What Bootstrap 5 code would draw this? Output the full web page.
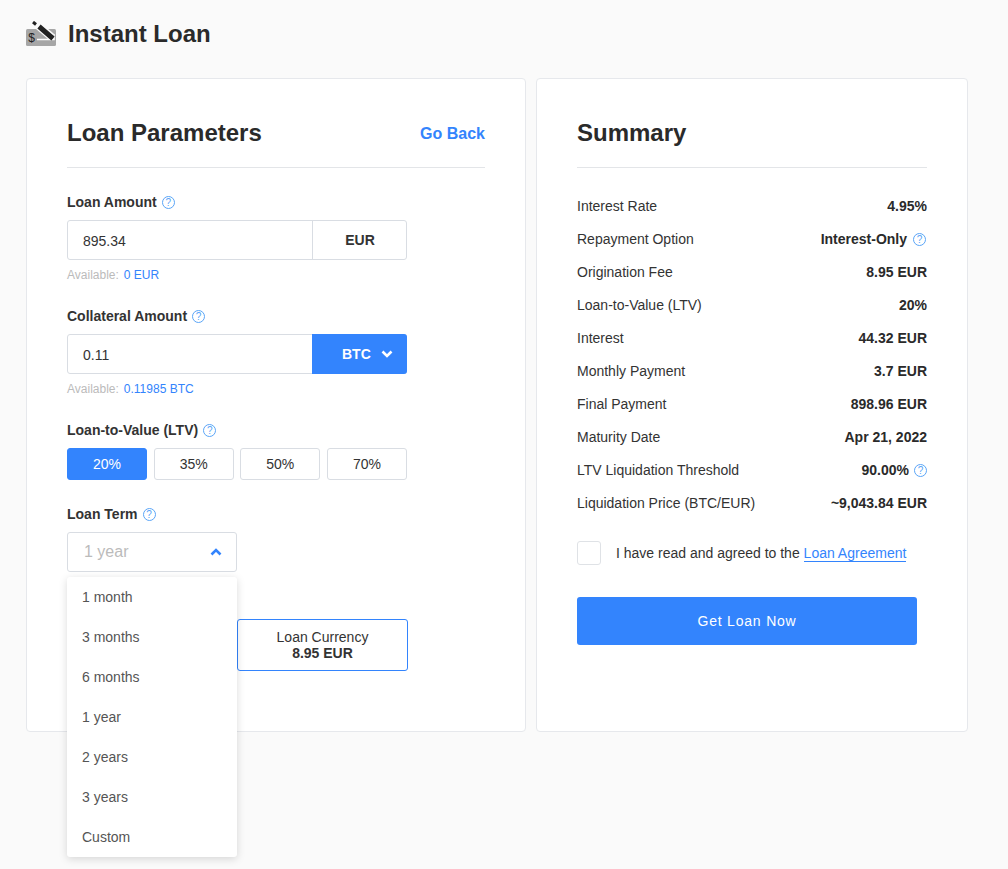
<!doctype html>
<html lang="en"><head><meta charset="utf-8"><title>Instant Loan</title>
<link href="https://cdn.jsdelivr.net/npm/bootstrap@5.3.0/dist/css/bootstrap.min.css" rel="stylesheet">
<style>
body{background:#fafafa;font-family:"Liberation Sans",Arial,sans-serif;color:#333;font-size:14px;min-height:869px}
.shell{padding:0 26px}
.topbar{height:68px;margin-bottom:10px;gap:12px}
.topbar h1{font-size:24px;font-weight:700;color:#2a2a2a;margin:0;line-height:28px}
.panel{background:#fff;border:1px solid #e6e8ec;border-radius:4px;padding:40px;height:654px}
.panel-l{width:500px}.panel-r{width:432px;margin-left:10px}
.panel-head{height:49px;border-bottom:1px solid #e3e5e8;align-items:flex-start;margin-bottom:26px}
.panel-head h2{font-size:24px;line-height:28px;font-weight:700;color:#2a2a2a;margin:0}
.back{font-size:16px;font-weight:700;color:#3384fd;text-decoration:none;line-height:30px}
.fld{width:340px}
.lbl{font-size:14px;font-weight:700;color:#333;line-height:16px;height:16px;margin-bottom:10px;gap:5px}
.hint{display:block;flex:none;width:13px;height:13px;border:1px solid #5aa5f7;border-radius:50%;color:#5aa5f7;font-size:10px;font-weight:400;line-height:11px;text-align:center}
.pair{height:40px;border:1px solid #d9dde3;border-radius:3px}
.pair-v{flex:1;padding-left:15px;line-height:40px;font-size:14px;color:#333}
.pair-u{width:95px;margin:-1px -1px -1px 0;border-left:1px solid #d9dde3;font-weight:700;color:#333;line-height:40px;text-align:center}
.pair-btc{width:95px;margin:-1px -1px -1px 0;background:#3384fd;color:#fff;font-weight:700;border-radius:0 3px 3px 0;gap:10px;padding-left:30px;height:40px}
.avail{font-size:12px;line-height:14px;margin-top:8px;height:14px;color:#bbb;gap:5px}
.avail span+span{color:#3384fd}
.gapb{margin-bottom:26px}
.ltv{margin-bottom:26px}
.ltv-b{width:80px;height:32px;border:1px solid #d9dde3;border-radius:3px;text-align:center;line-height:30px;color:#333;background:#fff}
.ltv-b.on{background:#3384fd;border-color:#3384fd;color:#fff}
.term-wrap{width:170px}
.term{height:40px;border:1px solid #d9dde3;border-radius:3px;padding:0 14px 0 16px;font-size:16px;color:#bbb}
.menu-pop{top:45px;left:0;width:170px;background:#fff;border-radius:3px;box-shadow:0 2px 8px rgba(0,0,0,.15);z-index:5}
.menu-pop div{height:40px;line-height:40px;padding-left:15px;color:#555}
.fee-row{margin-top:47px;width:341px}
.fee{width:171px;height:52px;border:1px solid #3384fd;border-radius:3px;text-align:center;line-height:16px;padding-top:9px;color:#333}
.fee-l{width:170px;border-color:#d9dde3;border-right:0;border-radius:3px 0 0 3px}
.fee b{display:block}
.panel-r .panel-head{margin-bottom:22px}
.sum{height:33px;color:#333}
.sum b{color:#2a2a2a}
.val-q{gap:5px}
.val-q-in{gap:6px;margin-right:1px}
.agree{margin-top:21px;height:24px;gap:15px}
.tick{width:24px;height:24px;border:1px solid #dfe2e6;border-radius:3px;background:#fff}
.agree a{color:#3384fd;text-decoration:none;border-bottom:1px solid #3384fd}
.cta{width:340px;height:48px;margin-top:32px;background:#3384fd;border:0;border-radius:3px;color:#fff;letter-spacing:.8px;font-size:14px}
.cta:hover{background:#3384fd;color:#fff}
</style></head><body>
<div class="shell">
<header class="topbar d-flex align-items-center">
<svg width="30" height="26" viewBox="0 0 30 26"><rect x="0" y="8" width="30" height="17" rx="1.500" fill="#a6a6a6"/><path d="M11 18.500H28V13" fill="none" stroke="#fff" stroke-width="1.500"/><path d="M12 4.500 25.500 16" fill="none" stroke="#fafafa" stroke-width="8"/><path d="M13 5.500 24 15 27 17.500" fill="none" stroke="#222" stroke-width="5"/><path d="M7 1 10 3.500" fill="none" stroke="#222" stroke-width="3"/><text x="5.500" y="21" text-anchor="middle" font-size="12" font-family="Liberation Sans" fill="#222">$</text></svg>
<h1>Instant Loan</h1></header>
<main class="d-flex align-items-start">
<section class="panel panel-l">
<div class="panel-head d-flex justify-content-between"><h2>Loan Parameters</h2><a class="back" href="#">Go Back</a></div>
<div class="fld gapb">
<div class="lbl d-flex align-items-center">Loan Amount <span class="hint">?</span></div>
<div class="pair d-flex"><div class="pair-v">895.34</div><div class="pair-u">EUR</div></div>
<div class="avail d-flex"><span>Available:</span><span>0 EUR</span></div></div>
<div class="fld gapb">
<div class="lbl d-flex align-items-center">Collateral Amount <span class="hint">?</span></div>
<div class="pair d-flex"><div class="pair-v">0.11</div><div class="pair-btc d-flex align-items-center">BTC <svg width="12" height="8" viewBox="0 0 12 8"><path d="M1.500 1.500 6 6l4.500-4.500" fill="none" stroke="#fff" stroke-width="2.600"/></svg></div></div>
<div class="avail d-flex"><span>Available:</span><span>0.11985 BTC</span></div></div>
<div class="fld">
<div class="lbl d-flex align-items-center">Loan-to-Value (LTV) <span class="hint">?</span></div>
<div class="ltv d-flex justify-content-between"><div class="ltv-b on">20%</div><div class="ltv-b">35%</div><div class="ltv-b">50%</div><div class="ltv-b">70%</div></div></div>
<div class="lbl d-flex align-items-center">Loan Term <span class="hint">?</span></div>
<div class="term-wrap position-relative">
<div class="term d-flex align-items-center justify-content-between">1 year <svg width="12" height="8" viewBox="0 0 12 8"><path d="M1.500 6.500 6 2l4.500 4.500" fill="none" stroke="#3384fd" stroke-width="2.600"/></svg></div>
<div class="menu-pop position-absolute"><div>1 month</div><div>3 months</div><div>6 months</div><div>1 year</div><div>2 years</div><div>3 years</div><div>Custom</div></div>
</div>
<div class="fee-row d-flex"><div class="fee fee-l">BTC<b>0.00 BTC</b></div><div class="fee">Loan Currency<b>8.95 EUR</b></div></div>
</section>
<section class="panel panel-r">
<div class="panel-head d-flex"><h2>Summary</h2></div>
<div class="sum d-flex justify-content-between align-items-center"><span>Interest Rate</span><b>4.95%</b></div>
<div class="sum d-flex justify-content-between align-items-center"><span>Repayment Option</span><span class="d-flex align-items-center val-q-in"><b>Interest-Only</b> <span class="hint">?</span></span></div>
<div class="sum d-flex justify-content-between align-items-center"><span>Origination Fee</span><b>8.95 EUR</b></div>
<div class="sum d-flex justify-content-between align-items-center"><span>Loan-to-Value (LTV)</span><b>20%</b></div>
<div class="sum d-flex justify-content-between align-items-center"><span>Interest</span><b>44.32 EUR</b></div>
<div class="sum d-flex justify-content-between align-items-center"><span>Monthly Payment</span><b>3.7 EUR</b></div>
<div class="sum d-flex justify-content-between align-items-center"><span>Final Payment</span><b>898.96 EUR</b></div>
<div class="sum d-flex justify-content-between align-items-center"><span>Maturity Date</span><b>Apr 21, 2022</b></div>
<div class="sum d-flex justify-content-between align-items-center"><span>LTV Liquidation Threshold</span><span class="d-flex align-items-center val-q"><b>90.00%</b> <span class="hint">?</span></span></div>
<div class="sum d-flex justify-content-between align-items-center"><span>Liquidation Price (BTC/EUR)</span><b>~9,043.84 EUR</b></div>
<div class="agree d-flex align-items-center"><div class="tick"></div><div>I have read and agreed to the <a href="#">Loan Agreement</a></div></div>
<button class="btn cta d-block">Get Loan Now</button>
</section>
</main></div>
<script src="https://cdn.jsdelivr.net/npm/bootstrap@5.3.0/dist/js/bootstrap.bundle.min.js"></script>
</body></html>
